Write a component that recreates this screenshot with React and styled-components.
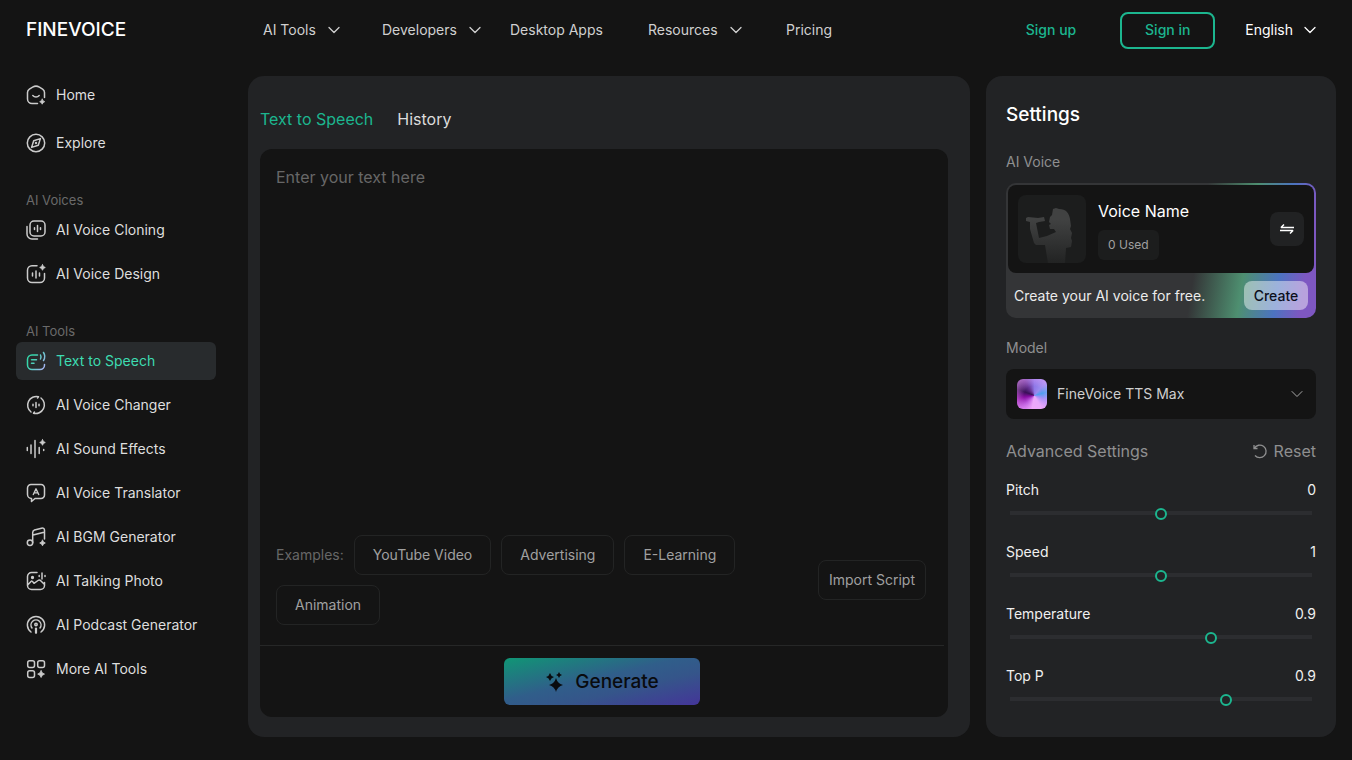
import React, { useState } from 'react';
import styled, { createGlobalStyle, css } from 'styled-components';

// 사이드바 아이콘
const Spark = ({ x, y, r }) => (
    <path
        d={`M${x} ${y - r}Q${x + r * 0.2} ${y - r * 0.2} ${x + r} ${y}Q${x + r * 0.2} ${y + r * 0.2} ${x} ${y + r}Q${x - r * 0.2} ${y + r * 0.2} ${x - r} ${y}Q${x - r * 0.2} ${y - r * 0.2} ${x} ${y - r}Z`}
        fill="currentColor"
        strokeWidth="0.8"
    />
);

const icons = {
    home: (
        <>
            <path d="M11.5 18.5H6A4.500 4.500 0 0 1 1.5 14V7.5C1.5 6 2.2 4.9 3.4 4.1L6.6 2.1C8.7 .9 11.3 .9 13.4 2.1L16.6 4.1C17.8 4.9 18.5 6 18.5 7.5V12.5" />
            <path d="M6.8 10.5C8.5 12.4 11.5 12.4 13.2 10.5" />
            <Spark x={16.2} y={16.7} r={2.5} />
        </>
    ),
    explore: (
        <>
            <circle cx="10" cy="10" r="8.7" />
            <path d="M14.4 5.6L12.3 12.3L5.6 14.4L7.7 7.7Z" />
            <circle cx="10" cy="10" r=".5" />
        </>
    ),
    cloning: (
        <>
            <rect x="4" y="1" width="15" height="15" rx="4" />
            <path d="M1 6.500V14A5 5 0 0 0 6 19H11.500M8.500 7.700V9.500M11.500 5.500V11.500M14.500 7.700V9.500" />
        </>
    ),
    design: (
        <>
            <path d="M11 1.700H6A4.500 4.500 0 0 0 1.500 6.200V14A4.500 4.500 0 0 0 6 18.500H14A4.500 4.500 0 0 0 18.500 14V9.500M6.500 9V12M10 7V14M13.500 9V12" />
            <Spark x={16.500} y={3.500} r={2.800} />
        </>
    ),
    speech: (
        <>
            <path d="M11.500 4H6A4.500 4.500 0 0 0 1.500 8.500V14A4.500 4.500 0 0 0 6 18.500H14A4.500 4.500 0 0 0 18.500 14V13.500M5.500 8.700H10.500M5.500 12.300H8" />
            <path d="M14.500 4Q15.600 6 14.500 8M17.500 1.500Q20 5.500 17.500 9.500" />
        </>
    ),
    changer: (
        <path d="M12.500 1.700A8.700 8.700 0 0 0 5 17M7.500 18.300A8.700 8.700 0 0 0 15 3M12.500 1.700L11.500 3M7.500 18.300L8.500 17M7 9.300V10.700M10 7.500V12.500M13 9.300V10.700" />
    ),
    effects: (
        <>
            <path d="M1.300 8.500V11.500M5 6V14.500M9 1.500V18.500M13.200 8.500V14.500M17.700 10.500V11.500" />
            <Spark x={16.500} y={3.500} r={2.800} />
        </>
    ),
    translator: (
        <>
            <path d="M5 1.500H15A3.500 3.500 0 0 1 18.500 5V12A3.500 3.500 0 0 1 15 15.500H9L5.500 18.500V15.500A4 4 0 0 1 1.500 11.500V5A3.500 3.500 0 0 1 5 1.500Z" />
            <path d="M7.300 11.500L10 5.800L12.700 11.500M8.500 9.900H11.500" strokeWidth="1.400" />
        </>
    ),
    bgm: (
        <>
            <circle cx="4" cy="15.800" r="2.700" />
            <path d="M6.700 15.800V5.500C6.700 4 7.500 3.300 8.500 3L15.500 1.200C17.200 .8 18.500 1.600 18.500 3.200V12M7 8L18 5.200" />
            <Spark x={16.500} y={16} r={2.800} />
        </>
    ),
    photo: (
        <>
            <path d="M11 1.500H5.500A4 4 0 0 0 1.500 5.500V14.500A4 4 0 0 0 5.500 18.500H14.500A4 4 0 0 0 18.500 14.500V11.500M1.700 14L5 10.500Q6 9.500 7 11L8 12.300L12 9.500Q13.500 8.500 15 10L18.500 13.500" />
            <circle cx="6.500" cy="6.500" r=".9" fill="currentColor" />
            <path d="M13.200 4.500V5.500M16 2V8M19 4.500V5.500" />
        </>
    ),
    podcast: (
        <>
            <path d="M5 17A8.600 8.600 0 1 1 15 17M6 13A5 5 0 1 1 14 13" />
            <circle cx="10" cy="9.500" r="1.200" />
            <path d="M10 13.500V17.800" strokeWidth="2.200" />
        </>
    ),
    more: (
        <>
            <rect x="1.700" y="1.700" width="6.800" height="6.800" rx="2" />
            <rect x="11.700" y="1.700" width="6.800" height="6.800" rx="2" />
            <rect x="1.700" y="11.700" width="6.800" height="6.800" rx="2" />
            <Spark x={15.100} y={15.100} r={3.400} />
        </>
    ),
};

const SideIcon = ({ name }) => (
    <IconSvg viewBox="0 0 20 20" aria-hidden="true">
        {name === 'speech' ? (
            <defs>
                <linearGradient id="speechStroke" gradientUnits="userSpaceOnUse" x1="2" y1="6" x2="19" y2="16">
                    <stop offset="0.2" stopColor="#35d6aa" />
                    <stop offset="1" stopColor="#a9b4f4" />
                </linearGradient>
            </defs>
        ) : null}
        <g stroke={name === 'speech' ? 'url(#speechStroke)' : 'currentColor'}>{icons[name]}</g>
    </IconSvg>
);

const Chevron = () => (
    <ChevronSvg viewBox="0 0 12 12" aria-hidden="true">
        <path d="M1 3.500L6 8.500L11 3.500" />
    </ChevronSvg>
);

const menus = [
    { name: 'AI Tools', drop: true },
    { name: 'Developers', drop: true },
    { name: 'Desktop Apps' },
    { name: 'Resources', drop: true },
    { name: 'Pricing' },
];

const mainLinks = [
    { name: 'Home', icon: 'home' },
    { name: 'Explore', icon: 'explore' },
];

const groups = [
    {
        title: 'AI Voices',
        links: [
            { name: 'AI Voice Cloning', icon: 'cloning' },
            { name: 'AI Voice Design', icon: 'design' },
        ],
    },
    {
        title: 'AI Tools',
        links: [
            { name: 'Text to Speech', icon: 'speech', active: true },
            { name: 'AI Voice Changer', icon: 'changer' },
            { name: 'AI Sound Effects', icon: 'effects' },
            { name: 'AI Voice Translator', icon: 'translator' },
            { name: 'AI BGM Generator', icon: 'bgm' },
            { name: 'AI Talking Photo', icon: 'photo' },
            { name: 'AI Podcast Generator', icon: 'podcast' },
            { name: 'More AI Tools', icon: 'more' },
        ],
    },
];

const examples = ['YouTube Video', 'Advertising', 'E-Learning', 'Animation'];

const defaults = { pitch: 0, speed: 1, temperature: 0.9, topP: 0.9 };

const sliders = [
    { id: 'pitch', name: 'Pitch', min: -12, max: 12, step: 1 },
    { id: 'speed', name: 'Speed', min: 0.5, max: 1.5, step: 0.1 },
    { id: 'temperature', name: 'Temperature', min: 0.1, max: 1.3, step: 0.1 },
    { id: 'topP', name: 'Top P', min: 0.4, max: 1.1, step: 0.1 },
];

export default function App() {
    const [text, setText] = useState('');
    const [values, setValues] = useState(defaults);

    return (
        <>
            <GlobalStyle />
            <Page>
                {/* 상단 메뉴 */}
                <Header>
                    <Logo href="#">FINEVOICE</Logo>
                    <Menu>
                        {menus.map((el) => (
                            <MenuLink href="#" key={el.name}>
                                {el.name}
                                {el.drop ? <Chevron /> : null}
                            </MenuLink>
                        ))}
                    </Menu>
                    <Account>
                        <SignUp href="#">Sign up</SignUp>
                        <SignIn type="button">Sign in</SignIn>
                        <Language type="button">
                            English
                            <Chevron />
                        </Language>
                    </Account>
                </Header>
                <Body>
                    {/* 사이드바 */}
                    <Sidebar>
                        <MainLinks>
                            {mainLinks.map((el) => (
                                <SideLink href="#" key={el.name}>
                                    <SideIcon name={el.icon} />
                                    {el.name}
                                </SideLink>
                            ))}
                        </MainLinks>
                        {groups.map((group) => (
                            <SideGroup key={group.title}>
                                <SideTitle>{group.title}</SideTitle>
                                <SideList>
                                    {group.links.map((el) => (
                                        <SideLink href="#" $active={el.active} key={el.name}>
                                            <SideIcon name={el.icon} />
                                            {el.name}
                                        </SideLink>
                                    ))}
                                </SideList>
                            </SideGroup>
                        ))}
                    </Sidebar>

                    {/* 텍스트 입력 */}
                    <EditorPanel>
                        <Tabs>
                            <Tab type="button" $active>Text to Speech</Tab>
                            <Tab type="button">History</Tab>
                        </Tabs>
                        <Editor>
                            <TextInput
                                aria-label="Text"
                                placeholder="Enter your text here"
                                value={text}
                                onChange={(e) => setText(e.target.value)}
                            />
                            <Tools>
                                <Examples>
                                    <ExamplesLabel>Examples:</ExamplesLabel>
                                    {examples.map((el) => (
                                        <ExampleButton type="button" key={el}>{el}</ExampleButton>
                                    ))}
                                </Examples>
                                <ImportButton type="button">Import Script</ImportButton>
                            </Tools>
                            <Submit>
                                <GenerateButton type="button">
                                    <GenerateIcon viewBox="0 0 20 20" aria-hidden="true">
                                        <path d="M11 6Q12.500 11.500 18 13Q12.500 14.500 11 20Q9.500 14.500 4 13Q9.500 11.500 11 6Z" />
                                        <path d="M5 1Q5.800 4.200 9 5Q5.800 5.800 5 9Q4.200 5.800 1 5Q4.200 4.200 5 1Z" />
                                        <path d="M14 0Q14.600 2.400 17 3Q14.600 3.600 14 6Q13.400 3.600 11 3Q13.400 2.400 14 0Z" />
                                    </GenerateIcon>
                                    Generate
                                </GenerateButton>
                            </Submit>
                        </Editor>
                    </EditorPanel>

                    {/* 설정 */}
                    <SettingsPanel>
                        <SettingsTitle>Settings</SettingsTitle>
                        <FieldTitle>AI Voice</FieldTitle>
                        <VoiceCard>
                            <VoiceInfo>
                                <Avatar viewBox="0 0 68 68" aria-hidden="true">
                                    <defs>
                                        <linearGradient id="singer" x1="0" y1="0" x2="0" y2="1">
                                            <stop offset="0.200" stopColor="#414242" />
                                            <stop offset="1" stopColor="#222323" />
                                        </linearGradient>
                                    </defs>
                                    <path
                                        fill="url(#singer)"
                                        d="M8 23L10 22L20 23L26 22L27 26L21 27L18 28L21 43L29 41L38 37L36 34L32 34L31 30L33 29L31 27L32 22L34 20L35 14L38 13L41 14C48 14 51 18 52 24L53 31L52 34L54 38L53 43L54 46L53 52L48 53L47 68L30 68L27 50L18 50L16 48L12 34L12 27L8 26Z"
                                    />
                                </Avatar>
                                <VoiceText>
                                    <VoiceName>Voice Name</VoiceName>
                                    <UsedBadge>0 Used</UsedBadge>
                                </VoiceText>
                                <SwapButton type="button" aria-label="Change voice">
                                    <SwapIcon viewBox="0 0 16 16" aria-hidden="true">
                                        <path d="M15 6.500H2L5 3.500M1 9.500H14L11 12.500" />
                                    </SwapIcon>
                                </SwapButton>
                            </VoiceInfo>
                            <CreateRow>
                                Create your AI voice for free.
                                <CreateButton type="button">Create</CreateButton>
                            </CreateRow>
                        </VoiceCard>

                        <FieldTitle as="label" htmlFor="model">Model</FieldTitle>
                        <ModelBox>
                            <ModelImage />
                            <ModelSelect id="model" defaultValue="max">
                                <option value="max">FineVoice TTS Max</option>
                            </ModelSelect>
                            <Chevron />
                        </ModelBox>

                        <AdvancedRow>
                            Advanced Settings
                            <ResetButton type="button" onClick={() => setValues(defaults)}>
                                <ResetIcon viewBox="0 0 16 16" aria-hidden="true">
                                    <path d="M2 2V5.500H5.500M2.300 5.300A6.300 6.300 0 1 1 3 12.500" />
                                </ResetIcon>
                                Reset
                            </ResetButton>
                        </AdvancedRow>
                        {sliders.map((el) => (
                            <SliderField key={el.id}>
                                <SliderHead>
                                    <label htmlFor={el.id}>{el.name}</label>
                                    <span>{values[el.id]}</span>
                                </SliderHead>
                                <Slider
                                    id={el.id}
                                    type="range"
                                    min={el.min}
                                    max={el.max}
                                    step={el.step}
                                    value={values[el.id]}
                                    onChange={(e) => setValues({ ...values, [el.id]: Number(e.target.value) })}
                                />
                            </SliderField>
                        ))}
                    </SettingsPanel>
                </Body>
            </Page>
        </>
    );
}

const GlobalStyle = createGlobalStyle`
    * {
        box-sizing: border-box;
    }
    body {
        margin: 0;
        background: #141414;
        color: #dedede;
        font-family: Inter, sans-serif;
        font-size: 14px;
        line-height: 20px;
    }
    a {
        color: inherit;
        text-decoration: none;
    }
    button, select, textarea {
        margin: 0;
        padding: 0;
        border: 0;
        background: none;
        color: inherit;
        font: inherit;
    }
    button {
        cursor: pointer;
    }
`

const Page = styled.div`
    min-height: 100vh;
    display: flex;
    flex-direction: column;
`

// 상단 메뉴
const Header = styled.header`
    height: 60px;
    padding: 0 36px 0 26px;
    display: flex;
    align-items: center;
`
const Logo = styled.a`
    width: 237px;
    color: #fff;
    font-size: 19px;
    font-weight: 500;
`
const Menu = styled.nav`
    display: grid;
    grid-template-columns: 119px 128px 138px 138px auto;
    color: #d0d0d0;
`
const MenuLink = styled.a`
    display: flex;
    align-items: center;
    gap: 12px;
    white-space: nowrap;
`
const ChevronSvg = styled.svg`
    width: 12px;
    height: 12px;
    fill: none;
    stroke: currentColor;
    stroke-width: 1.3;
    stroke-linecap: round;
    stroke-linejoin: round;
`
const Account = styled.div`
    margin-left: auto;
    display: flex;
    align-items: center;
`
const SignUp = styled.a`
    margin-right: 44px;
    color: #1cb68f;
    font-weight: 500;
`
const SignIn = styled.button`
    width: 95px;
    height: 37px;
    margin-right: 30px;
    border: 2px solid #1cb68f;
    border-radius: 8px;
    color: #1cb68f;
    font-weight: 500;
`
const Language = styled.button`
    display: flex;
    align-items: center;
    gap: 11px;
    color: #fff;
`

const Body = styled.div`
    flex: 1;
    padding: 16px 16px 23px;
    display: grid;
    grid-template-columns: 216px minmax(0, 1fr) 350px;
    gap: 16px;
`

// 사이드바
const Sidebar = styled.aside`
    padding-right: 16px;
`
const MainLinks = styled.nav`
    display: grid;
    gap: 10px;
`
const SideGroup = styled.section`
    margin-top: 28px;
`
const SideTitle = styled.h2`
    margin: 0 0 1px;
    padding-left: 10px;
    color: #6a6a6a;
    font-size: 13px;
    font-weight: 400;
    line-height: 20px;
`
const SideList = styled.nav`
    display: grid;
    gap: 6px;
`
const SideLink = styled.a`
    height: 38px;
    padding-left: 10px;
    display: flex;
    align-items: center;
    gap: 10px;
    border-radius: 6px;
    white-space: nowrap;

    ${(props) => props.$active && css`
        background: #282b2d;
        color: #3ddcb1;
    `}
`
const IconSvg = styled.svg`
    flex: none;
    width: 20px;
    height: 20px;
    color: #cbcbcb;
    fill: none;
    stroke-width: 1.5;
    stroke-linecap: round;
    stroke-linejoin: round;
    overflow: visible;
`

// 텍스트 입력
const EditorPanel = styled.main`
    padding: 31px 22px 20px 12px;
    display: flex;
    flex-direction: column;
    border-radius: 16px;
    background: #222325;
`
const Tabs = styled.div`
    margin-bottom: 18px;
    display: flex;
    gap: 24px;
`
const Tab = styled.button`
    color: ${(props) => (props.$active ? '#1cb68f' : '#dcdcdc')};
    font-size: 16px;
    line-height: 24px;
`
const Editor = styled.div`
    flex: 1;
    padding-right: 4px;
    display: flex;
    flex-direction: column;
    border-radius: 12px;
    background: #141414;
`
const TextInput = styled.textarea`
    flex: 1;
    min-height: 120px;
    padding: 16px;
    outline: none;
    resize: none;
    color: #e3e3e3;
    font-size: 16px;
    line-height: 24px;

    &::placeholder {
        color: #676767;
    }
`
const Tools = styled.div`
    padding: 0 18px 20px 16px;
    display: flex;
    align-items: center;
    justify-content: space-between;
    gap: 50px;
`
const Examples = styled.div`
    display: flex;
    flex-wrap: wrap;
    align-items: center;
    gap: 10px;
`
const ExamplesLabel = styled.span`
    color: #676767;
`
const ExampleButton = styled.button`
    height: 40px;
    padding: 0 18px;
    border: 1px solid #232424;
    border-radius: 8px;
    color: #a0a0a0;
`
const ImportButton = styled(ExampleButton)`
    flex: none;
    padding: 0 10px;
`
const Submit = styled.div`
    height: 72px;
    display: flex;
    align-items: center;
    justify-content: center;
    border-top: 1px solid #262727;
`
const GenerateButton = styled.button`
    width: 196px;
    height: 47px;
    display: flex;
    align-items: center;
    justify-content: center;
    gap: 10px;
    border-radius: 6px;
    background: linear-gradient(to bottom right, #109675, #305e8a 45%, #35558a 65%, #443599);
    color: #090b0e;
    font-size: 19px;
    font-weight: 500;
`
const GenerateIcon = styled.svg`
    width: 20px;
    height: 20px;
    fill: currentColor;
`

// 설정
const SettingsPanel = styled.aside`
    padding: 26px 20px 9px;
    display: flex;
    flex-direction: column;
    border-radius: 16px;
    background: #222325;
`
const SettingsTitle = styled.h1`
    margin: 0 0 24px;
    color: #fff;
    font-size: 19px;
    font-weight: 500;
    line-height: 26px;
`
const FieldTitle = styled.div`
    margin-bottom: 11px;
    color: #8f8f90;
`
const VoiceCard = styled.div`
    margin-bottom: 20px;
    padding: 2px 2px 0;
    border-radius: 10px;
    background: linear-gradient(99deg, #343537 61%, #4e8f70 76%, #4c73c0 87%, #7e57c2 95%);
`
const VoiceInfo = styled.div`
    padding: 10px;
    display: flex;
    align-items: center;
    gap: 12px;
    border-radius: 8px;
    background: #141414;
`
const Avatar = styled.svg`
    width: 68px;
    height: 68px;
    border-radius: 8px;
    background: #1c1d1d;
`
const VoiceText = styled.div`
    flex: 1;
    display: flex;
    flex-direction: column;
    align-items: flex-start;
    gap: 6px;
`
const VoiceName = styled.div`
    color: #fff;
    font-size: 16px;
    line-height: 26px;
`
const UsedBadge = styled.span`
    padding: 5px 10px;
    border-radius: 6px;
    background: #1c1d1d;
    color: #a0a0a0;
    font-size: 12px;
`
const SwapButton = styled.button`
    width: 34px;
    height: 34px;
    display: grid;
    place-items: center;
    border-radius: 8px;
    background: #212223;
    color: #fff;
`
const SwapIcon = styled.svg`
    width: 16px;
    height: 16px;
    fill: none;
    stroke: currentColor;
    stroke-width: 1.5;
    stroke-linejoin: bevel;
`
const CreateRow = styled.div`
    height: 45px;
    padding: 0 6px;
    display: flex;
    align-items: center;
    justify-content: space-between;
    color: #ececec;
`
const CreateButton = styled.button`
    width: 64px;
    height: 29px;
    border-radius: 8px;
    background: rgba(255, 255, 255, 0.45);
    color: #0c0f1c;
    font-weight: 500;
`
const ModelBox = styled.div`
    height: 50px;
    margin-bottom: 20px;
    padding: 0 13px 0 11px;
    display: flex;
    align-items: center;
    gap: 10px;
    border-radius: 8px;
    background: #141414;
    color: #cfcfcf;

    ${ChevronSvg} {
        stroke: #a8a8a8;
        stroke-width: 1;
    }
`
const ModelImage = styled.div`
    width: 30px;
    height: 30px;
    border-radius: 6px;
    background:
        radial-gradient(circle at 55% 55%, transparent 40%, rgba(250, 170, 255, 0.45) 85%),
        conic-gradient(from 0deg at 58% 55%, #8f78e8, #9a8cf0 40deg, #4f9ff0 75deg, #a890f8 110deg, #e8a8fa 150deg, #eda8fa 190deg, #c060e0 225deg, #8a10a5 260deg, #3a1058 290deg, #6a3598 325deg, #8f78e8);
`
const ModelSelect = styled.select`
    flex: 1;
    height: 30px;
    appearance: none;
    outline: none;
`
const AdvancedRow = styled.div`
    margin-bottom: 17px;
    display: flex;
    align-items: center;
    justify-content: space-between;
    color: #8f8f90;
    font-size: 16px;
    line-height: 24px;
`
const ResetButton = styled.button`
    display: flex;
    align-items: center;
    gap: 6px;
`
const ResetIcon = styled.svg`
    width: 16px;
    height: 16px;
    fill: none;
    stroke: currentColor;
    stroke-width: 1.3;
`
const SliderField = styled.div`
    height: 62px;
`
const SliderHead = styled.div`
    margin-bottom: 8px;
    display: flex;
    justify-content: space-between;
    color: #f0f0f0;
`
const Slider = styled.input`
    display: block;
    width: calc(100% + 4px);
    height: 12px;
    margin: 0 -2px;
    appearance: none;
    background: linear-gradient(#2c2d30, #2c2d30) center 3px / calc(100% - 12px) 4px no-repeat;

    &::-webkit-slider-thumb {
        appearance: none;
        width: 12px;
        height: 12px;
        border: 2px solid #1cb68f;
        border-radius: 50%;
        background: #222325;
    }
`
